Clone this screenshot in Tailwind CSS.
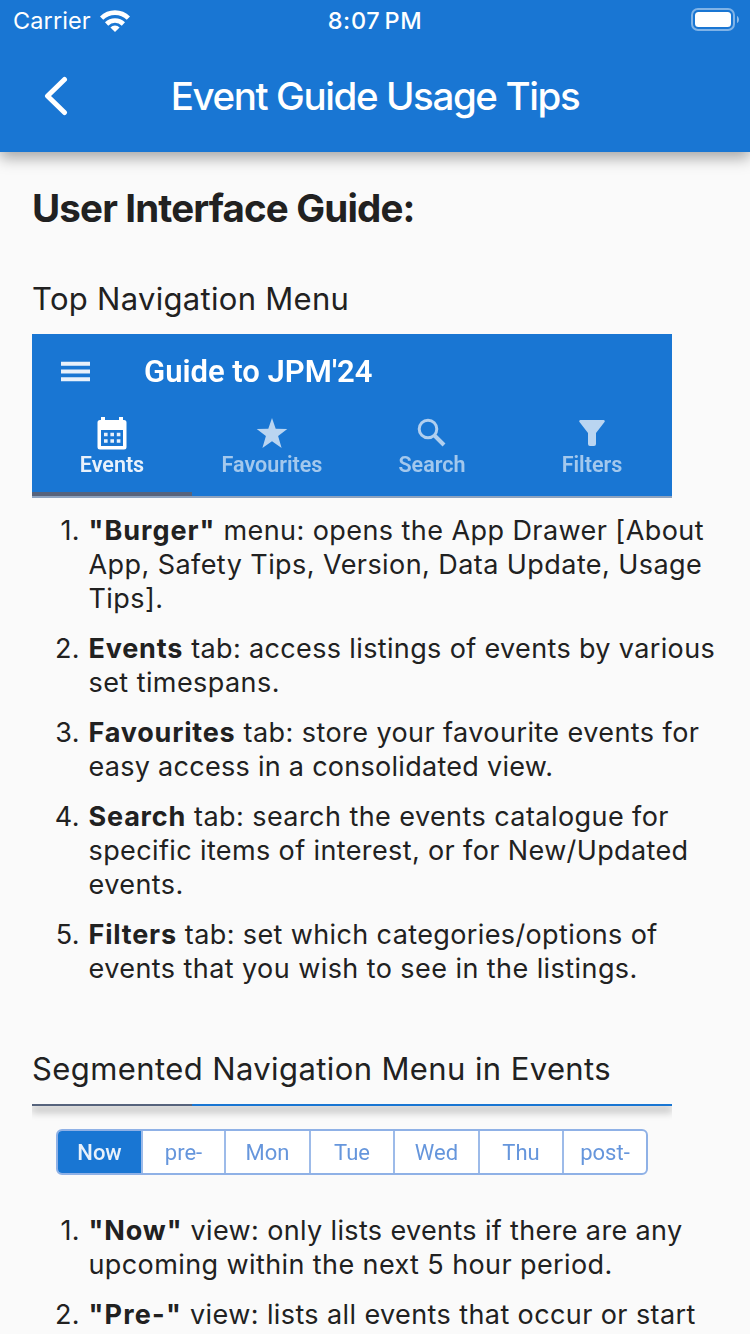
<!DOCTYPE html>
<html lang="en">
    <head>
        <meta charset="UTF-8">
        <title>Event Guide Usage Tips</title>
        <script src="https://cdn.jsdelivr.net/npm/@tailwindcss/browser@4"></script>
    </head>
    <body class="w-[750px] h-[1334px] overflow-hidden bg-[#fafafa] text-[#212121] font-['Inter',sans-serif]">
        <header class="relative h-[152px] bg-[#1976d3] text-white shadow-[0_6px_14px_rgba(0,0,0,0.34)]">
            <!-- status bar -->
            <div class="grid grid-cols-3 items-center h-10 pl-[13px] pr-[11px]">
                <div class="flex items-center gap-[9px] pt-px">
                    <span class="text-[23.5px] leading-10 tracking-[0.1px]">Carrier</span>
                    <svg class="w-[30px] h-[22px] -mt-px" viewBox="0 0 30 22" fill="none" stroke="#fff" stroke-width="4.600">
                        <path d="M1.600 8.200a19 19 0 0 1 26.800 0"/>
                        <path d="M6.600 14a12 12 0 0 1 16.800 0"/>
                        <path d="M15 22l-4.600-4.600a6.600 6.600 0 0 1 9.200 0z" fill="#fff" stroke="none"/>
                    </svg>
                </div>
                <div class="pt-px pr-[2px] text-center text-[23.5px] leading-10 font-medium tracking-[0.7px] [word-spacing:-3px]">8:07 PM</div>
                <div class="flex justify-end">
                    <svg class="w-[48px] h-[23px] -mt-[2px]" viewBox="0 0 48 23">
                        <rect x="1" y="1" width="42" height="21" rx="6" fill="none" stroke="#fff" stroke-opacity=".45" stroke-width="2"/>
                        <rect x="4" y="4" width="36" height="15" rx="3.500" fill="#fff"/>
                        <path d="M46 8v7c2.600-1 2.600-6 0-7z" fill="#fff" fill-opacity=".5"/>
                    </svg>
                </div>
            </div>
            <div class="grid grid-cols-[112px_1fr_112px] items-center h-28">
                <svg class="w-[26px] h-[40px] ml-[43px]" viewBox="0 0 26 40" fill="none" stroke="#fff" stroke-width="5" stroke-linecap="round" stroke-linejoin="round">
                    <path d="M21.500 3.500L4.500 20l17 16.500"/>
                </svg>
                <h1 class="pt-[2px] text-center text-[38.5px] font-medium tracking-[-1.4px] whitespace-nowrap">Event Guide Usage Tips</h1>
            </div>
        </header>

        <main class="pl-8 whitespace-nowrap">
            <h2 class="pt-8 text-[38.5px] leading-[48px] font-bold tracking-[-0.85px]">User Interface Guide:</h2>

            <h3 class="mt-[47px] text-[31px] leading-[40px] tracking-[0.3px]">Top Navigation Menu</h3>
            <div class="mt-[15px] w-[640px] h-[164px] bg-[#1976d3] text-white font-['Roboto',sans-serif] overflow-hidden flex flex-col">
                <div class="h-[76px] flex items-center pl-7 blur-[0.7px]">
                    <svg class="w-[31px] h-[22px]" viewBox="0 0 31 22" fill="none" stroke="#fff" stroke-opacity=".9" stroke-width="4">
                        <path d="M1 2.800h29M1 10.500h29M1 18.200h29"/>
                    </svg>
                    <span class="ml-[53px] pt-px text-[31px] font-semibold">Guide to JPM'24</span>
                </div>
                <div class="grid grid-cols-4 h-[82px] text-[21.5px] leading-6 font-semibold text-center text-white/60 blur-[0.7px]">
                    <div class="flex flex-col items-center text-white/90">
                        <svg class="mt-[6px] w-[32px] h-[37px]" viewBox="0 0 32 37">
                            <path fill="#fff" d="M5 1h4v3h14V1h4v3h1a2.500 2.500 0 0 1 2.500 2.500V31a2.500 2.500 0 0 1-2.500 2.500H4A2.500 2.500 0 0 1 1.500 31V6.500A2.500 2.500 0 0 1 4 4h1z"/>
                            <path fill="#1976d3" d="M5 14h22v16H5z"/>
                            <path stroke="#fff" stroke-opacity=".9" stroke-width="3.600" stroke-dasharray="3.600 2.800" d="M8 18.500h17M8 25h17"/>
                        </svg>
                        <span>Events</span>
                    </div>
                    <div class="flex flex-col items-center">
                        <svg class="mt-[6px] w-[32px] h-[37px]" viewBox="0 0 32 37">
                            <path fill="#bad5f1" d="M16 2l3.700 10.700 11.600.2-9.200 7.100 3.500 12L16 25.200 6.400 32l3.500-12L.7 12.900l11.600-.2z"/>
                        </svg>
                        <span>Favourites</span>
                    </div>
                    <div class="flex flex-col items-center">
                        <svg class="mt-[6px] w-[32px] h-[37px]" viewBox="0 0 32 37" fill="none" stroke="#b1cfef">
                            <circle cx="12" cy="13" r="8.800" stroke-width="3"/>
                            <path stroke-width="4" d="M18.500 19.500l9.500 9.500"/>
                        </svg>
                        <span>Search</span>
                    </div>
                    <div class="flex flex-col items-center">
                        <svg class="mt-[6px] w-[32px] h-[37px]" viewBox="0 0 32 37">
                            <path fill="#bad5f1" d="M4.500 4h23a1.200 1.200 0 0 1 1 2L20 17v11a2 2 0 0 1-2 2h-4a2 2 0 0 1-2-2V17L3.500 6a1.200 1.200 0 0 1 1-2z"/>
                        </svg>
                        <span>Filters</span>
                    </div>
                </div>
                <div class="h-[6px] border-b-2 border-[#8ea3bf]">
                    <div class="w-[160px] h-1 bg-[#56637c]"></div>
                </div>
            </div>

            <ol class="mt-4 flex flex-col gap-4 text-[27px] leading-[34px] tracking-[0.43px]">
                <li class="flex gap-[8.5px]"><span class="w-12 text-right">1.</span><p><b class="tracking-[1px]">"Burger"</b> menu: opens the App Drawer [About<br>App, Safety Tips, Version, Data Update, Usage<br>Tips].</p></li>
                <li class="flex gap-[8.5px]"><span class="w-12 text-right">2.</span><p><b class="tracking-[0.8px]">Events</b> <span class="tracking-[0.36px]">tab: access listings of events by various</span><br>set timespans.</p></li>
                <li class="flex gap-[8.5px]"><span class="w-12 text-right">3.</span><p><b class="tracking-[0.8px]">Favourites</b> tab: store your favourite events for<br><span class="tracking-[0.28px]">easy access in a consolidated view.</span></p></li>
                <li class="flex gap-[8.5px]"><span class="w-12 text-right">4.</span><p><b class="tracking-[0.8px]">Search</b> tab: search the events catalogue for<br><span class="tracking-[0.38px]">specific items of interest, or for New/Updated</span><br>events.</p></li>
                <li class="flex gap-[8.5px]"><span class="w-12 text-right">5.</span><p><b class="tracking-[0.8px]">Filters</b> <span class="tracking-[0.38px]">tab: set which categories/options of</span><br>events that you wish to see in the listings.</p></li>
            </ol>

            <h3 class="mt-[63px] text-[31px] leading-[40px] tracking-[0.4px]">Segmented Navigation Menu in Events</h3>
            <div class="mt-[15px] w-[640px] h-[93px] overflow-hidden font-['Roboto',sans-serif]">
                <div class="h-[2px] bg-[#1976d3] shadow-[0_4px_9px_1px_rgba(0,0,0,0.4)]">
                    <div class="w-[160px] h-full bg-[#56637c]"></div>
                </div>
                <div class="mt-[23px] ml-6 w-[592px] h-[46px] grid grid-cols-[85px_83px_85px_84px_85px_84px_82px] rounded-[6px] border-2 border-[#8fb1e6] bg-white overflow-hidden text-[22px] leading-[43px] text-center text-[#6696dc] divide-x-2 divide-[#9dbbe9] blur-[0.6px]">
                    <div class="bg-[#1976d3] text-white/90 font-medium">Now</div>
                    <div>pre-</div>
                    <div>Mon</div>
                    <div>Tue</div>
                    <div>Wed</div>
                    <div>Thu</div>
                    <div>post-</div>
                </div>
            </div>

            <ol class="mt-[17px] flex flex-col gap-4 text-[27px] leading-[34px] tracking-[0.4px]">
                <li class="flex gap-[8.5px]"><span class="w-12 text-right">1.</span><p><b class="tracking-[0.9px]">"Now"</b> <span class="tracking-[0.36px]">view: only lists events if there are any</span><br>upcoming within the next 5 hour period.</p></li>
                <li class="flex gap-[8.5px]"><span class="w-12 text-right">2.</span><p><b class="tracking-[1.2px]">"Pre-"</b> view: lists all events that occur or start</p></li>
            </ol>
        </main>
    </body>
</html>
